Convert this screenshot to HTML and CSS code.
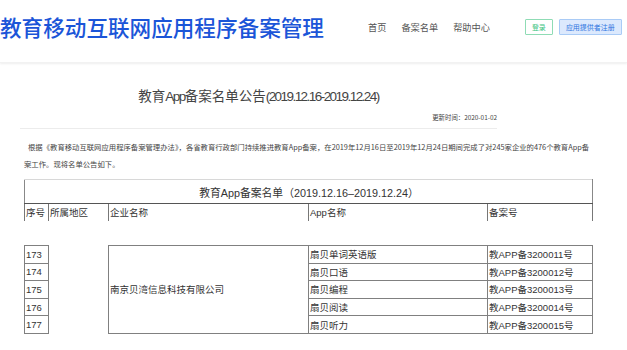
FILE: index.html
```html
<!DOCTYPE html>
<html lang="zh-CN">
<head>
<meta charset="utf-8">
<title>教育App备案名单公告</title>
<link rel="stylesheet" href="styles.css">
</head>
<body>
<header class="top">
  <div class="top-inner">
    <h1 class="brand">教育移动互联网应用程序备案管理</h1>
    <nav class="nav">
      <a>首页</a>
      <a>备案名单</a>
      <a>帮助中心</a>
    </nav>
    <div class="actions">
      <a class="btn-login">登录</a>
      <a class="btn-reg">应用提供者注册</a>
    </div>
  </div>
</header>
<main class="notice">
  <div class="notice-head">
    <h2 class="notice-title">教育<span class="narrow">App</span>备案名单公告<span class="narrow">(2019.12.16-2019.12.24)</span></h2>
    <div class="notice-date">更新时间：2020-01-02</div>
  </div>
  <div class="notice-body">
    <p class="intro">根据《教育移动互联网应用程序备案管理办法》，各省教育行政部门持续推进教育App备案，在2019年12月16日至2019年12月24日期间完成了对245家企业的476个教育App备<br>案工作。现将名单公告如下。</p>
    <table class="list">
      <colgroup>
        <col class="c-seq"><col class="c-area"><col class="c-corp"><col class="c-app"><col class="c-no">
      </colgroup>
      <tr class="cap-row"><td colspan="5">教育App备案名单（2019.12.16–2019.12.24）</td></tr>
      <tr class="head-row"><td>序号</td><td>所属地区</td><td>企业名称</td><td>App名称</td><td>备案号</td></tr>
      <tr class="gap-row"><td colspan="5"></td></tr>
      <tr class="data-row"><td>173</td><td class="blank"></td><td class="corp" rowspan="5">南京贝湾信息科技有限公司</td><td>扇贝单词英语版</td><td>教APP备3200011号</td></tr>
      <tr class="data-row"><td>174</td><td class="blank"></td><td>扇贝口语</td><td>教APP备3200012号</td></tr>
      <tr class="data-row"><td>175</td><td class="blank"></td><td>扇贝编程</td><td>教APP备3200013号</td></tr>
      <tr class="data-row"><td>176</td><td class="blank"></td><td>扇贝阅读</td><td>教APP备3200014号</td></tr>
      <tr class="data-row"><td>177</td><td class="blank"></td><td>扇贝听力</td><td>教APP备3200015号</td></tr>
    </table>
  </div>
</main>
</body>
</html>
```
FILE: styles.css
```css
* { box-sizing: border-box; }
html, body { margin: 0; padding: 0; background: #fff; }
body {
  width: 627px;
  height: 350px;
  overflow: hidden;
  font-family: "Liberation Sans", "Noto Sans CJK SC", sans-serif;
  color: #333;
}
a { text-decoration: none; }

.top {
  height: 63px;
  box-shadow: 0 1px 2px rgba(0, 0, 0, 0.07);
  border-bottom: 1px solid #f2f2f2;
}
.top-inner {
  height: 54px;
  display: flex;
  align-items: center;
}
.brand {
  margin: 0;
  width: 325px;
  font-family: "Noto Sans CJK SC", sans-serif;
  font-weight: 500;
  font-size: 21.6px;
  line-height: 24px;
  color: #1b55d8;
  white-space: nowrap;
}
.nav {
  margin-left: 43px;
  display: flex;
  gap: 15px;
  font-family: "Noto Sans CJK SC", sans-serif;
  font-size: 9.2px;
  color: #555;
}
.nav a { color: #555; }
.actions {
  margin-left: 35px;
  display: flex;
  gap: 6px;
  font-family: "Noto Sans CJK SC", sans-serif;
  font-size: 7px;
}
.btn-login {
  height: 16px;
  line-height: 14px;
  padding: 0 6px;
  border: 1px solid #8fdcb5;
  color: #3cc47f;
  background: #fff;
  border-radius: 1px;
}
.btn-reg {
  height: 16px;
  line-height: 14px;
  padding: 0 6px;
  border: 1px solid #a9cbf6;
  color: #2f74e0;
  background: #dce9fd;
  border-radius: 1px;
  white-space: nowrap;
}

.notice-head {
  margin-left: 20px;
  width: 477px;
  padding-top: 22px;
  border-bottom: 1px solid #ececec;
  padding-bottom: 5px;
}
.notice-title {
  margin: 0;
  text-align: center;
  font-family: "Noto Sans CJK SC", sans-serif;
  font-weight: 400;
  font-size: 13.5px;
  line-height: 20px;
  color: #444;
  white-space: nowrap;
}
.narrow {
  font-family: "Liberation Sans", sans-serif;
  font-size: 13.5px;
  letter-spacing: -1.55px;
}
.notice-date {
  margin-top: 6px;
  text-align: right;
  font-family: "Noto Sans CJK SC", sans-serif;
  font-size: 6.4px;
  line-height: 10px;
  color: #444;
}

.notice-body {
  padding-left: 24px;
}
.intro {
  margin: 9px 0 0;
  width: 600px;
  text-indent: 4px;
  font-family: "Noto Sans CJK SC", sans-serif;
  font-size: 7.35px;
  line-height: 17px;
  color: #444;
  white-space: nowrap;
}

.list {
  margin-top: 7px;
  border-collapse: collapse;
  table-layout: fixed;
  width: 568px;
  font-size: 9.5px;
  color: #333;
}
.c-seq { width: 24px; }
.c-area { width: 60px; }
.c-corp { width: 200px; }
.c-app { width: 179px; }
.c-no { width: 105px; }
.list td {
  padding: 0 0 0 1px;
  white-space: nowrap;
  vertical-align: middle;
}
.cap-row td {
  height: 24px;
  text-align: center;
  font-size: 10.8px;
  border-top: 1px solid #d8d8d8;
  border-left: 1px solid #888;
  border-right: 1px solid #888;
  border-bottom: 1px solid #555;
}
.head-row td {
  height: 17px;
  border-left: 1px solid #777;
  border-right: 1px solid #777;
}
.gap-row td {
  height: 25px;
  border: none;
}
.data-row td {
  height: 17.6px;
  border: 1px solid #808080;
}
.data-row td.blank {
  border: none;
}
.data-row td.corp {
  border: 1px solid #808080;
}
```
